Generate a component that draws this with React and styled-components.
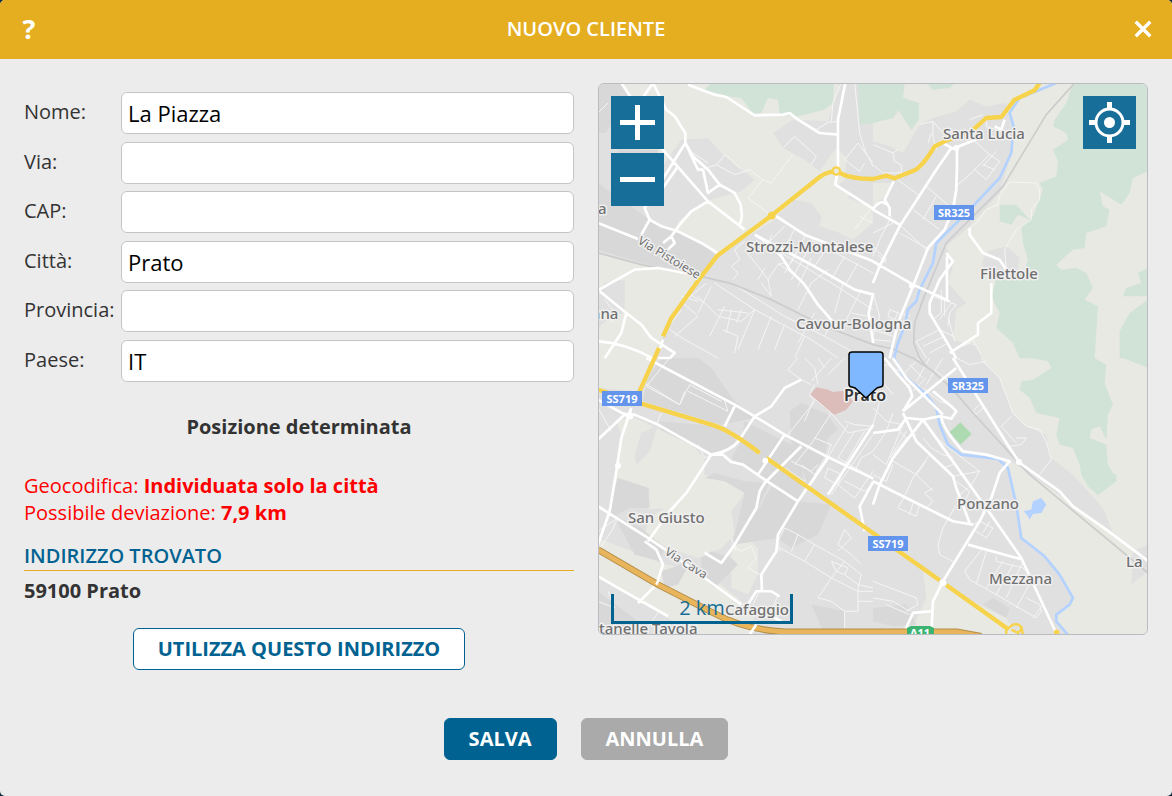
import React, { useState } from "react";
import styled, { createGlobalStyle } from "styled-components";

const GlobalStyle = createGlobalStyle`
  * { box-sizing: border-box; }
  body {
    margin: 0;
    background: #0b2a3c;
    font-family: "Open Sans", "Noto Sans", sans-serif;
    font-size: 20px;
    line-height: 27px;
    color: #333;
  }
`;

const Dialog = styled.form`
  display: flex;
  flex-direction: column;
  min-height: 100vh;
  background: #ececec;
  border-radius: 5px;
  overflow: hidden;
`;

const Header = styled.header`
  display: flex;
  align-items: center;
  justify-content: space-between;
  height: 59px;
  padding: 0 17px 2px;
  background: #e5ae21;
  color: #fff;
`;

const Title = styled.h1`
  margin: 0;
  font-size: 20px;
  font-weight: 600;
`;

const HeaderButton = styled.button`
  display: flex;
  align-items: center;
  justify-content: center;
  width: 24px;
  height: 32px;
  padding: 0;
  border: 0;
  background: none;
  color: #fff;
  font: 700 27px "Open Sans", sans-serif;
  cursor: pointer;
`;

const Content = styled.div`
  display: grid;
  grid-template-columns: 1fr 1fr;
  align-items: start;
  gap: 24px;
  padding: 24px;
`;

const Column = styled.div`
  display: flex;
  flex-direction: column;
  padding-top: 9px;
`;

const Fields = styled.div`
  display: flex;
  flex-direction: column;
  justify-content: space-between;
  min-height: 290px;
`;

const FieldRow = styled.div`
  display: grid;
  grid-template-columns: 97px 1fr;
  align-items: start;
`;

const Label = styled.label`
  padding-top: 6px;
`;

const TextInput = styled.input`
  width: 100%;
  height: 42px;
  padding: 0 6px;
  border: 1px solid #c2c6c8;
  border-radius: 6px;
  background: #fff;
  color: #000;
  font: 22px "Open Sans", sans-serif;
`;

const Status = styled.h2`
  margin: 31px 0 32px;
  font-size: 20px;
  line-height: 27px;
  font-weight: 700;
  text-align: center;
`;

const Warning = styled.p`
  margin: 0;
  color: #f00;
`;

const SectionTitle = styled.h3`
  margin: 16px 0 6px;
  border-bottom: 1px solid #e5ae21;
  color: #006290;
  font-size: 20px;
  line-height: 28px;
  font-weight: 600;
`;

const Address = styled.strong`
  margin-bottom: 24px;
`;

const Button = styled.button`
  height: 42px;
  padding: 0 24px 2px;
  border: 1px solid ${(p) => p.$border};
  border-radius: 6px;
  background: ${(p) => p.$bg};
  color: ${(p) => p.$color || "#fff"};
  font: 700 20px "Open Sans", sans-serif;
  cursor: pointer;
`;

const UseAddress = styled(Button)`
  align-self: center;
`;

const Footer = styled.footer`
  display: flex;
  justify-content: center;
  gap: 24px;
  padding: 24px 24px 36px;
`;

const MapBox = styled.div`
  position: relative;
  aspect-ratio: 550 / 552;
  border: 1px solid #b9bdc1;
  border-radius: 6px;
  overflow: hidden;
  background: #e0e0e0;
`;

const MapSvg = styled.svg`
  display: block;
  width: 100%;
  height: 100%;
`;

const MapControls = styled.div`
  position: absolute;
  top: 12px;
  ${(p) => p.$side}: ${(p) => (p.$side === "left" ? 12 : 11)}px;
  display: grid;
  gap: 4px;
`;

const MapButton = styled.button`
  width: 53px;
  height: 53px;
  padding: 0;
  border: 0;
  background: #176e98;
  color: #fff;
  cursor: pointer;

  svg { display: block; }
`;

const Scale = styled.div`
  position: absolute;
  left: 12px;
  bottom: 10px;
  width: 182px;
  height: 30px;
  border: 3px solid #00638f;
  border-top: 0;
  color: #176e98;
  text-align: center;
`;

// Ogni livello ha quattro tracciati: nord-ovest, nord-est, sud-ovest, sud-est
const TILES = [[0, 0], [825, 0], [0, 825], [825, 825]];

const AREAS = [
  {
    fill: "#e8e9e2",
    d: [
      "M60 0H725L690 115 585 110 525 150 555 195 620 230 665 265 715 195 745 225 740 290 715 310 825 375V420L765 470 725 450 665 430 600 440 540 405 440 465 355 520 300 480 230 440 150 410 130 360V130Z M0 510L120 540 310 580 220 700 165 826H0V735L40 700 80 690V590L20 600 0 625Z",
      "M95 0H825V826H335L310 790 240 770 250 680 280 660 225 600 240 550 220 490 290 430 380 330 415 215 420 130 400 60 340 70 290 50 250 85 180 105 140 125 90 210 50 190 0 175V110L60 105 80 80 120 140 138 60 90 45Z M0 300H60L30 345 0 370Z",
      "M0 0H160L120 100 0 90Z M55 190L100 175 280 260 320 300 320 350 400 370 440 405 400 460 410 530 370 570 300 600 210 570 140 530 155 480 200 450 150 455 155 390 60 360 45 400 70 230Z M0 540L200 620 320 640 430 730 470 760 460 831H300L210 780 0 650Z M450 540L480 570V650L450 710 400 690V570Z",
      "M320 0H825V831H580L550 780 600 720 560 650 510 595 445 540 430 450 405 325 415 310 600 440 720 525 690 450 600 350 535 300 520 230 460 205 420 165 380 60Z M150 640L220 690 400 780 430 831H110L160 720Z",
    ],
  },
  {
    fill: "#e0e0e0",
    d: [
      "M250 170L330 165 370 210 470 290 430 325 340 350 245 410 230 440 160 410 140 375 200 240Z M540 395L590 350 640 360 670 400 665 430 600 440Z M750 345L770 305 825 345V375Z M0 190L110 200 180 300 130 415 0 330Z",
      "M330 530L345 505 400 490 440 525 435 560 330 570Z M385 85L410 100 395 140 340 150Z",
      "M110 290L130 225 180 200 155 280 115 320Z M15 240L60 190 50 260 15 270Z M320 290L400 300 430 350 410 375 320 350Z",
      "M780 580L825 560V640L775 680Z",
    ],
  },
  {
    fill: "#d8d8d8",
    d: [
      "M0 0H75L100 60 20 150H0Z M0 300L140 400 160 415 330 490 355 520 310 575 130 540 0 500Z M60 200H180V300L60 260Z",
      "",
      "M60 360L150 390 155 450 95 450 40 480 35 440Z M190 0H300L340 30 410 130 470 180 370 200 135 130 150 60Z M185 190L360 205 420 250 390 275 340 290 190 215Z M440 190L600 270 620 380 600 430 515 375 430 320 400 300 430 250Z M320 360L350 345 440 370 515 375 480 450 400 570 440 405 380 370Z M490 440L520 385 600 430 700 440 660 530 580 570 540 540 410 560 450 500Z M575 160L610 135 690 170 720 215 690 240 680 300 630 380 580 250Z M310 600L340 580 400 600 420 620 350 690 310 650Z M190 640L280 610 240 680 200 690Z M45 470L130 510 200 570 185 610 110 590Z M0 700L120 790V831H0Z M640 740L740 760V831H680Z",
      "M0 750L100 740 130 800 60 805 0 790Z M360 720L410 750 400 780 330 740Z",
    ],
  },
  {
    fill: "#d1e3d7",
    d: [
      "M320 20L340 0H708L705 60 680 80 600 100 545 95 540 50 510 45 490 90 465 92 430 45 385 40Z M780 0H826V120L785 125Z",
      "M0 0H95L90 45 138 60V110L115 140 75 80 60 105 0 120Z M160 0H245L230 15 180 20Z M600 0H825V265L780 285 770 330 745 365 680 325 690 370 710 380 700 430 640 450 635 495 600 500 550 545 565 560 610 555 640 570 660 615 635 650 675 670 665 826H440L420 780 370 735 380 690 355 640 370 590 490 560 455 560 465 530 450 480 445 430 480 400 510 320 500 300 550 280 555 235 540 200 585 170 580 150 540 130 545 110 580 60Z M380 365L430 365 470 410 435 395 415 425 380 415Z M825 555L795 570 805 600 760 615 750 640 825 640Z M770 690L825 650V826H740V745Z",
      "",
      "M475 0H665L700 20 695 75 720 140 705 170 700 245 680 205 655 215 650 240 700 260 705 320 720 345 730 350V370L675 412 645 385 625 350 620 320 600 270 560 260 550 230 560 180 490 165 470 120 440 95 445 70 480 65 535 30 525 10Z M750 0H825V30Z",
    ],
  },
  { fill: "#dcbdba", d: ["", "", "M635 110L655 88 690 95 705 102 735 98 765 130 745 155 710 170 695 162Z", ""] },
  { fill: "#aedab1", d: ["", "", "", "M262 193L296 228 263 260 230 222Z"] },
  { fill: "#b3d2ff", d: ["", "", "", "M480 430L505 420 520 440 505 465 480 468 470 485 465 475 452 460 475 455Z"] },
];

const LINES = [
  {
    // strade locali
    stroke: "#f5f5f5",
    width: 3,
    d: [
      "M555 195L590 160 655 220 640 245 M585 215L520 300 495 290 450 345 520 398 M495 290L455 260 410 275 355 245 382 215 430 260 M295 265L355 245 M285 210L330 240 M655 140L690 118 725 115 M700 115L705 60 730 0 M740 230L780 180 825 240 M785 150L800 200 825 250 M740 230L785 265 800 240 M770 0L785 150 M825 370L800 400 770 440 M785 400L825 420 M560 430L515 475 520 455 M440 475L410 500 425 530 400 550 420 570 405 590 M440 500L480 550 510 590 520 640 M510 590L540 545 560 540 M480 590L500 555 M520 640L490 600 M540 540L620 600 M560 570L600 500 M580 590L625 510 M600 610L640 525 M600 680L640 600 690 560 M590 440L550 510 M620 460L580 540 M690 490L650 550 M740 520L700 590 M780 540L740 610 M640 470L825 570 M550 510L700 600 825 680 M350 600L470 680 640 770 720 825 M400 600L560 700 680 760 825 840 M325 600L255 660 300 700 230 760 M300 640L360 700 430 715 470 680 M250 640L300 655 M260 625L310 655 M250 680L220 720 M380 670L360 710 335 760 M400 680L385 750 M430 680L415 720 M360 680L450 690 M375 740L420 760 410 810 M215 740L260 770 360 825 M470 680L420 800 M520 700L480 800 M560 725L530 800 M620 760L590 825 M340 610L300 690 M650 690L600 780 M700 720L680 760 M735 600L710 690 M790 620L750 700 730 740 M760 690L810 700 M0 90L30 60 M20 650L60 700 M5 690L50 720",
      "M60 280L135 335 M85 430L160 500 M80 450L170 500 M120 380L200 440 M160 310L230 370 M190 340L150 410 M250 310L300 265 350 215 300 170 M350 215L380 235 340 290 305 260 M330 245L365 260 M370 205L330 250 M340 100V130L370 140 M290 110L330 95 M140 125L180 115 210 150 M180 115V160L190 200 M175 150L165 180 M0 185L60 210 65 235 85 245V270L30 270 0 245 M60 210L75 200 M55 400L20 470 0 520 M0 490L40 530 10 550 M15 515L40 540 M0 450L60 420 M180 640L250 665 230 690 225 730 M205 620V690L180 710 M215 650V700 M235 660L200 710 M130 775L200 740 240 760 M130 775L160 825 M150 790L215 760 M170 810L225 780 M225 700L245 775 M300 770L330 825 M290 780L270 790 M50 680L75 690 65 710 45 700Z M75 690L110 700 M0 740L60 760 M0 770L55 775 M0 630L20 700 0 760 M400 560L395 500 430 440 475 410V380L500 350V320L490 300 410 297 380 340 375 365 340 380 310 420 290 435",
      "M215 0L190 30 M190 30L145 85 245 140 275 80 370 130 M140 75L245 140 M270 100L390 160 380 130 M0 150L40 220 M245 140L260 100 M570 35L610 65 640 80 M600 0L570 35 M620 0L650 30 660 80 M660 0L680 30 M700 0L640 70 M740 0L690 50 M650 80L635 110 650 130 570 230 M635 110L700 165 750 225 M700 165L645 250 590 320 M750 200L640 380 M645 130L620 190 M650 240L700 260 680 310 M825 230L700 410 M750 225L825 210 M740 190L770 200 825 205 M770 220L720 300 825 360 M800 220L740 320 M825 280L790 300 770 340 M680 300L650 350 610 320 M690 330L730 350 720 380 680 360Z M740 370L800 400 825 380 M720 380L770 420 M770 420L825 340 M580 310L640 340 660 320 M560 330L620 370 M740 330L700 400 M560 510L600 530 650 560 740 610 790 650 780 690 M560 510L540 550 545 580 M650 560L620 610 M600 530L580 580 M545 570L620 610 700 660 660 720 700 730 740 760 V831 M740 610L700 660 M700 610L750 630 740 650 715 640Z M740 650L780 680 825 690 M720 580L760 540 740 515 720 560 760 590 790 620 M700 660L780 700 825 700 M400 560L430 580 460 565 475 600 450 630 485 650 M370 610L410 565 M400 540L415 580 M300 260L320 300 340 290 M190 165L175 200 M0 520L60 480 40 520 0 580 M0 730L50 750 30 700 M180 765L140 820 M490 690L465 740 M540 710L520 760 550 790 M780 730H825 M780 690V760L740 760",
      "M330 10L380 60 420 165 460 205 500 215 520 250 535 305 500 350 M385 205L415 175 M385 205L430 255 M375 210L395 240 M430 240L460 240 445 260 410 265 M320 140L300 160 310 170 330 150 M0 150L40 190 90 200 M20 130L0 200 M60 165L40 220 0 280 M90 200L40 320 0 290 M100 220L50 300 M75 215L100 240 130 230 M100 240L60 290 M60 310L130 350 160 310 M170 290L120 360 95 415 M130 350L180 400 M150 270L210 330 240 320 M150 240L175 270 210 290 240 300 M190 240L320 340 290 390 M240 355L320 340 M250 370L290 400 270 440 M250 420L285 390 M0 350L40 370 60 320 M95 415L75 450 130 475 140 440 M110 470L120 435 M180 390L155 405 180 430 160 450 M250 440L210 510 195 560 200 590 240 610 M300 500L320 490 360 510 340 540 310 520 M350 490L330 525 M330 570L275 640 290 665 370 710 M370 595V610L450 630 480 660 M340 580L310 680 M390 610L340 690 M420 620L370 710 490 780 505 760 500 740 460 720 M450 610L400 720 M480 660L430 750 M510 740L480 780 M0 670L130 720 135 740 100 760 M0 720L60 730 110 760 M40 740L110 770 M80 40L40 20 0 30 M110 20L150 60 M140 0L90 50 M170 0L130 70 M210 0L160 80 M190 40L230 70 M250 0L290 20 340 10 M150 90L200 130 230 140 M120 70L100 90 M160 60L120 100 M20 60L60 110 M5 60L0 100",
    ],
  },
  {
    // ferrovia
    stroke: "#cccccc",
    width: 5,
    d: [
      "M0 510L130 545 300 578 400 602 520 650 680 730 826 785",
      "M605 0L520 95 390 310 220 480 150 650 125 720 122 780 140 826 M0 785L60 798 120 826",
      "",
      "M120 0L180 40 240 95 300 165 470 350 825 645 M140 0L160 25",
    ],
  },
  {
    // fiume Bisenzio
    stroke: "#b3d2ff",
    width: 8,
    d: [
      "",
      "M550 0L440 45 410 90 422 130 415 210 380 285 290 380 190 480 180 540 140 620 130 655 105 680 95 730 75 780 63 826",
      "",
      "M63 0L90 50 160 110 190 150 200 200 225 260 265 290 375 303 405 330 430 440 445 540 515 595 560 650 600 720 590 740 550 770 550 790 585 831",
    ],
  },
  {
    // strade principali
    stroke: "#ffffff",
    width: 8,
    d: [
      "M165 0L205 80 230 100 262 150 262 180 285 220 330 260 365 305 410 330 428 365 432 400 425 430 M70 0L110 60 190 195 330 355 440 440 M470 455L510 480 550 520 575 560 620 605 660 665 725 740 M262 180L140 375 155 410 190 430 240 445 310 480 358 510 M240 250L160 365 M155 410L130 455 M165 0L130 50 M262 180L300 260 M315 260L330 330 365 305 M300 260L315 260 M330 355L280 385 245 425 220 460 195 480 M220 460L230 480 210 500 M0 420L120 468 M0 622L110 560 180 555 310 580 M535 400L620 455 826 535 M470 455L640 545 770 620 826 635 M270 5L350 35 385 42 470 97 555 95 575 90 600 110 665 150 720 155 M742 0L720 110V260L712 305 826 378 M0 775Q80 780 165 826 M5 625L85 690 70 750 20 826 M85 690L130 725 160 765 230 810 215 826 M826 630L812 690 826 780 M195 770L185 800",
      "M235 195L190 260 80 430 20 550 0 600 M252 195V250L250 320 240 380 215 440 165 495 120 610 75 720 50 826 M0 380L85 428 M0 535L120 605 230 655 M220 510L240 535 200 590 170 660V690L235 800 250 826 M222 520V655 M230 810L315 755V720L355 690V600 M290 435V455L330 510 380 530 400 560 M62 295L35 350 50 375V400 M0 378Q25 345 40 365 M200 175L240 197 320 165 M395 110L385 140 365 130",
      "M145 0L410 140 470 175 560 230 685 295 826 362 M0 125L90 175 110 170 180 200 250 240 340 290Q400 280 425 245L470 175 520 145 560 90 610 65 M100 150L70 240 55 340 35 460 0 560 M340 290L265 405 215 460 150 550 M340 290L375 290 400 312 435 320 515 375 600 430 M610 265L500 375 485 400 475 450 410 560 370 615 320 585 M560 230L480 350 M690 300L600 430 540 530 535 580 490 650 492 700 M0 445L150 540 210 580 430 740 M140 550L175 575 195 620 175 680 120 735 M0 655L60 690 210 775 M0 245L85 165 M410 145L380 205 M826 200L690 410 M826 370L785 445 800 520 M450 740L475 700 520 700 545 715 M470 750L550 790 M180 0L215 0",
      "M0 370L240 490 300 500 M150 185L60 300 20 380 0 440 M90 165L130 250 240 355 250 390 290 495 M0 225L75 215 100 180 150 185 200 175 235 182 250 160 235 145 180 100 M90 160L250 30 M150 185L340 450 445 600 550 826 M240 0L410 270 440 315 560 400 600 445 700 515 800 590 826 610 M205 180Q215 220 270 280L340 290 410 310 380 345 355 420 320 490 210 670 180 730 175 831 M285 560L450 605 M90 831L120 765 175 760 M35 0L75 50 110 90 118 115 90 160 M60 0L100 60 210 170",
    ],
  },
];

const YELLOW_ROADS =
  "M0 920L140 965 350 1028Q400 1045 485 1110 M505 1125L825 1350 1025 1492 M1045 1506L1232 1640 M120 935L170 825 183 795 M195 760L220 705 310 580 358 518 520 398 665 282Q690 264 715 266 M725 270Q760 288 825 288L865 278 890 286 950 262Q975 248 1010 190L1040 175 1120 145 1165 105 1210 102 1250 50 1310 22 1325 0";

const PLACES = [
  ["Santa Lucia", 345, 56],
  ["Strozzi-Montalese", 148, 169],
  ["Filettole", 382, 196],
  ["Cavour-Bologna", 198, 246],
  ["San Giusto", 30, 440],
  ["Ponzano", 359, 426],
  ["Mezzana", 391, 501],
  ["La", 528, 484],
  ["Cafaggio", 127, 532],
  ["tanelle Tavola", 1, 551],
  ["a", 0, 131],
  ["nna", -7, 236],
];

const SHIELDS = [
  ["SR325", 336, 122],
  ["SR325", 350, 295],
  ["SS719", 4, 308],
  ["SS719", 270, 453],
];

const MapText = styled.text`
  font-family: "Noto Sans", sans-serif;
  font-size: ${(p) => p.$size || 15}px;
  font-weight: ${(p) => p.$weight || 500};
  fill: ${(p) => p.$fill || "#707070"};
  stroke: ${(p) => p.$halo || "#f0f0f0"};
  stroke-width: ${(p) => (p.$halo === "none" ? 0 : 3)}px;
  stroke-linejoin: round;
  paint-order: stroke;
`;

function CityMap() {
  return (
    <MapSvg viewBox="1 1 548 550" preserveAspectRatio="xMidYMid slice" role="img" aria-label="Mappa di Prato">
      <g transform="scale(0.3333)" strokeLinejoin="round">
        {AREAS.map((area) =>
          area.d.map((d, i) => <path key={area.fill + i} d={d} fill={area.fill} transform={`translate(${TILES[i]})`} />)
        )}
        {LINES.map((line) =>
          line.d.map((d, i) => (
            <path
              key={line.stroke + i}
              d={d}
              fill="none"
              stroke={line.stroke}
              strokeWidth={line.width}
              transform={`translate(${TILES[i]})`}
            />
          ))
        )}
        <g fill="none">
          <path d="M0 1400L180 1505 350 1592Q440 1640 560 1647H1080L1150 1660" stroke="#b38d48" strokeWidth="20" />
          <path d="M0 1400L180 1505 350 1592Q440 1640 560 1647H1080L1150 1660" stroke="#e9b55c" strokeWidth="14" />
          <path d={YELLOW_ROADS} stroke="#f6d34b" strokeWidth="13" />
          <path d="M175 1505L182 1490M455 1655L475 1625" stroke="#fff" strokeWidth="8" />
          <g stroke="#f6d34b" strokeWidth="7">
            <circle cx="715" cy="264" r="11" fill="#e8e9e2" />
            <circle cx="521" cy="398" r="8" />
            <path d="M1225 1655V1640L1245 1625Q1270 1620 1270 1640L1260 1650 1240 1640 M1275 1655L1270 1630" />
          </g>
        </g>
        <g fill="#fff">
          <circle cx="60" cy="1148" r="9" />
          <circle cx="502" cy="1133" r="9" />
          <circle cx="1035" cy="1500" r="10" />
          <circle cx="1075" cy="195" r="9" />
          <circle cx="1263" cy="1137" r="9" />
          <circle cx="942" cy="608" r="9" />
          <circle cx="95" cy="998" r="11" />
          <circle cx="1376" cy="1648" r="8" fill="#f6d34b" />
        </g>
      </g>

      <MapText x="39" y="160" transform="rotate(31 39 160)" $size={12} $weight={400}>Via Pistoiese</MapText>
      <MapText x="66" y="471" transform="rotate(32 66 471)" $size={12} $weight={400}>Via Cava</MapText>
      {PLACES.map(([name, x, y]) => (
        <MapText key={name} x={x} y={y}>{name}</MapText>
      ))}
      <MapText x="246" y="318" $size={16} $weight={600} $fill="#333">Prato</MapText>

      {SHIELDS.map(([name, x, y]) => (
        <g key={name + y}>
          <rect x={x} y={y} width="40" height="15" fill="#6495ed" />
          <MapText x={x + 20} y={y + 12} textAnchor="middle" $size={11} $weight={700} $fill="#fff" $halo="none">
            {name}
          </MapText>
        </g>
      ))}
      <path d="M309 552V545L313 543H332L336 545V552Z" fill="#3cb371" />
      <MapText x="322" y="554" textAnchor="middle" $size={11} $weight={700} $fill="#fff" $halo="none">A11</MapText>

      <path
        d="M254 269H282Q285 269 285 272V301Q285 304 282 304L279 305 268 315 257 305 254 304Q251 304 251 301V272Q251 269 254 269Z"
        fill="#7fb8ff"
        stroke="#000"
        strokeWidth="1.5"
      />
    </MapSvg>
  );
}

const FIELDS = [
  ["nome", "Nome:", "La Piazza"],
  ["via", "Via:", ""],
  ["cap", "CAP:", ""],
  ["citta", "Città:", "Prato"],
  ["provincia", "Provincia:", ""],
  ["paese", "Paese:", "IT"],
];

export default function App() {
  const [values, setValues] = useState(Object.fromEntries(FIELDS.map(([id, , value]) => [id, value])));

  return (
    <>
      <GlobalStyle />
      <Dialog onSubmit={(e) => e.preventDefault()}>
        <Header>
          <HeaderButton type="button" aria-label="Aiuto">?</HeaderButton>
          <Title>NUOVO CLIENTE</Title>
          <HeaderButton type="button" aria-label="Chiudi">
            <svg width="18" height="18" viewBox="0 0 18 18" stroke="currentColor" strokeWidth="3.4">
              <path d="M1.7 1.7L16.3 16.3M16.3 1.7L1.7 16.3" />
            </svg>
          </HeaderButton>
        </Header>

        <Content>
          <Column>
            <Fields>
              {FIELDS.map(([id, label]) => (
                <FieldRow key={id}>
                  <Label htmlFor={id}>{label}</Label>
                  <TextInput
                    id={id}
                    value={values[id]}
                    onChange={(e) => setValues({ ...values, [id]: e.target.value })}
                  />
                </FieldRow>
              ))}
            </Fields>
            <Status>Posizione determinata</Status>
            <Warning>Geocodifica: <strong>Individuata solo la città</strong></Warning>
            <Warning>Possibile deviazione: <strong>7,9 km</strong></Warning>
            <SectionTitle>INDIRIZZO TROVATO</SectionTitle>
            <Address>59100 Prato</Address>
            <UseAddress type="button" $bg="#fff" $border="#006290" $color="#006290">
              UTILIZZA QUESTO INDIRIZZO
            </UseAddress>
          </Column>

          <MapBox>
            <CityMap />
            <MapControls $side="left">
              <MapButton type="button" aria-label="Ingrandisci">
                <svg width="53" height="53" stroke="currentColor" strokeWidth="5">
                  <path d="M9 26.5H44M26.5 9V44" />
                </svg>
              </MapButton>
              <MapButton type="button" aria-label="Riduci">
                <svg width="53" height="53" stroke="currentColor" strokeWidth="5">
                  <path d="M9 26.5H44" />
                </svg>
              </MapButton>
            </MapControls>
            <MapControls $side="right">
              <MapButton type="button" aria-label="La mia posizione">
                <svg width="53" height="53" fill="none" stroke="currentColor">
                  <circle cx="26.5" cy="26.5" r="13.5" strokeWidth="3" />
                  <circle cx="26.5" cy="26.5" r="5.5" fill="currentColor" stroke="none" />
                  <path d="M26.5 6V14M26.5 39V47M6 26.5H14M39 26.5H47" strokeWidth="5" />
                </svg>
              </MapButton>
            </MapControls>
            <Scale>2 km</Scale>
          </MapBox>
        </Content>

        <Footer>
          <Button type="submit" $bg="#006290" $border="#006290">SALVA</Button>
          <Button type="button" $bg="#aaa" $border="#aaa">ANNULLA</Button>
        </Footer>
      </Dialog>
    </>
  );
}
